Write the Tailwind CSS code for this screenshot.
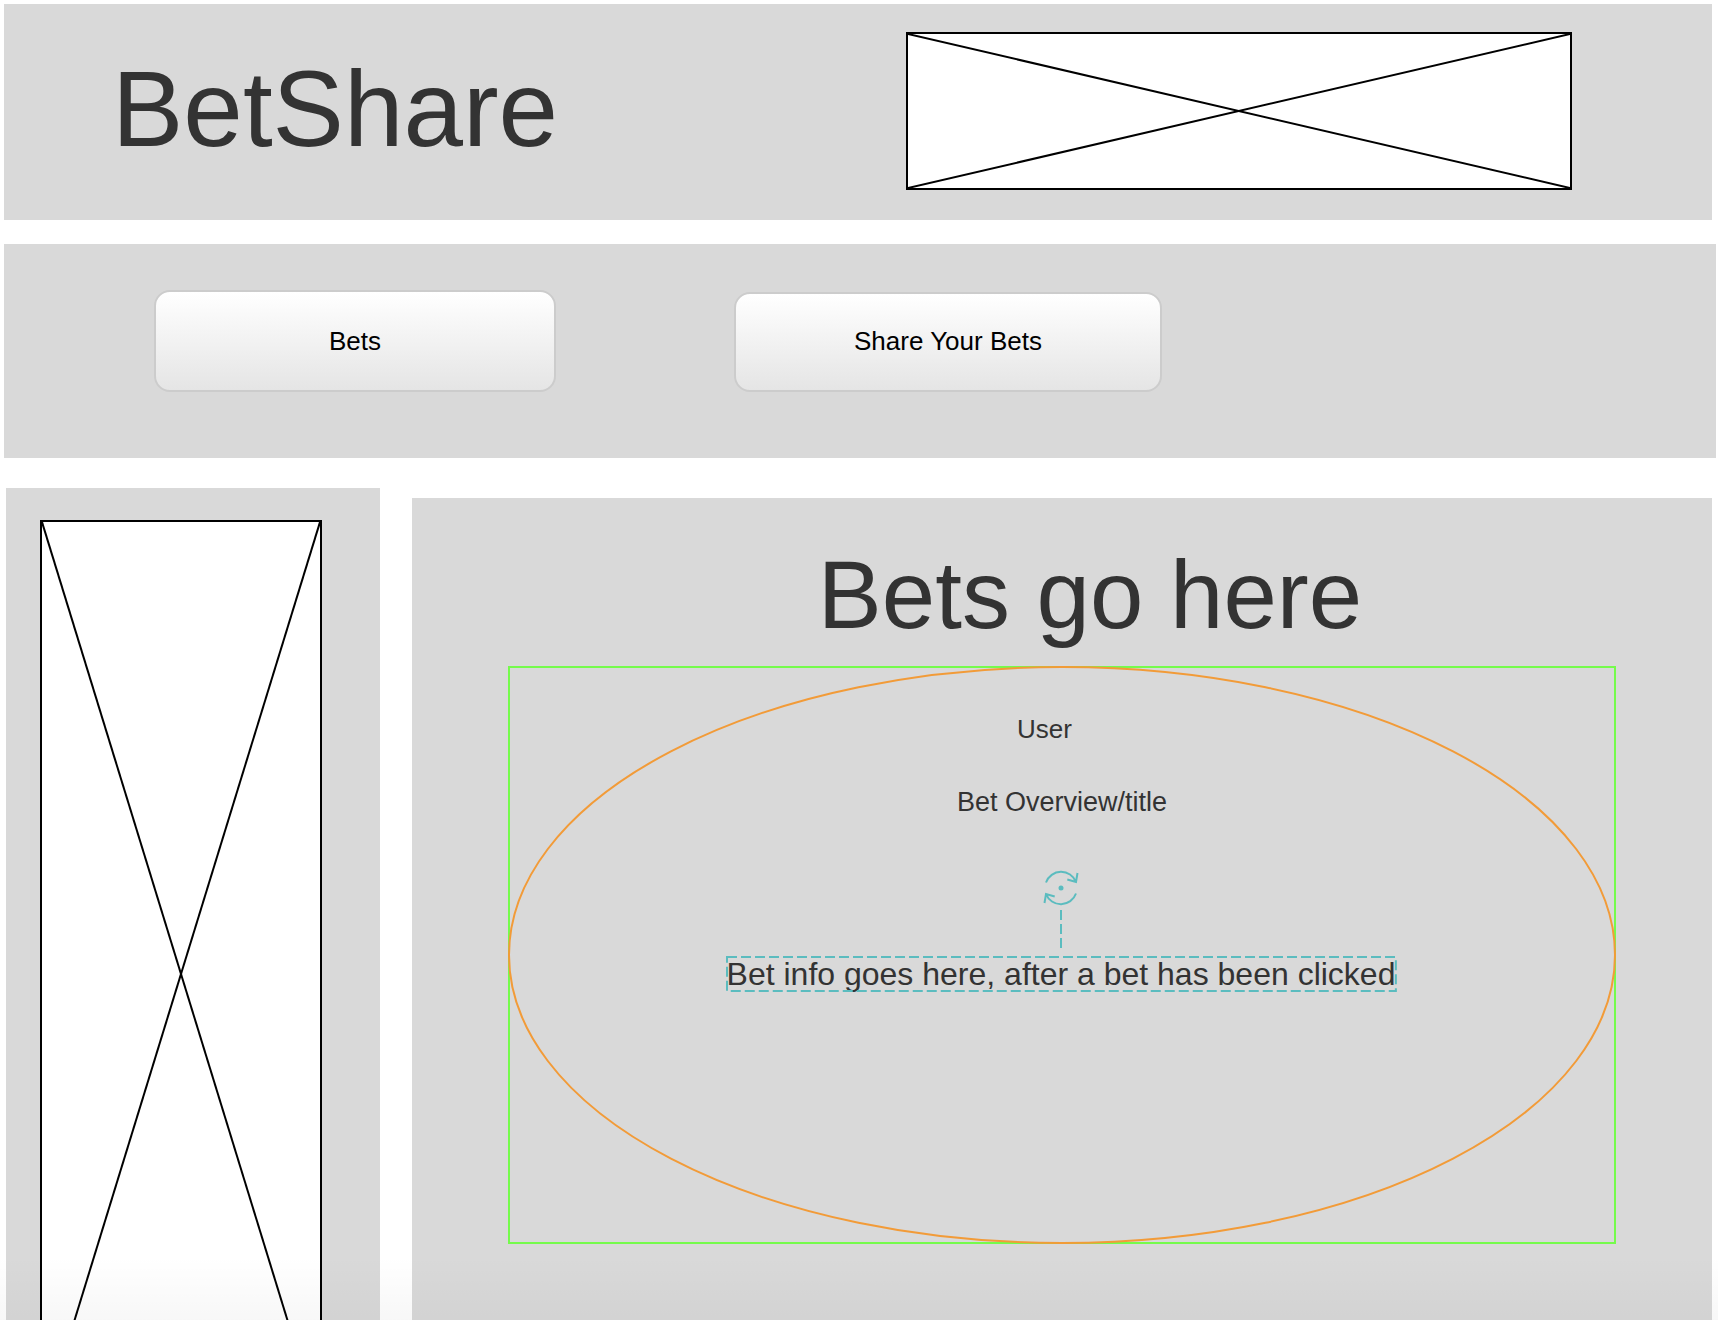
<!DOCTYPE html>
<html lang="en">
<head>
<meta charset="utf-8">
<meta name="viewport" content="width=device-width, initial-scale=1">
<title>BetShare</title>
<script src="https://cdn.jsdelivr.net/npm/@tailwindcss/browser@4"></script>
</head>
<body class="bg-white">
<div class="relative flex h-screen flex-col overflow-hidden pt-1 font-['Liberation_Sans',Arial,sans-serif] text-[#333333]">

  <header class="mr-1.5 ml-1 flex h-[216px] shrink-0 items-start justify-between bg-[#d9d9d9] pt-7 pr-[140px] pl-[108px]">
    <h1 class="pt-[17px] text-[107px] leading-[120px]">BetShare</h1>
    <!-- Banner placeholder -->
    <div class="h-[158px] w-[666px] border-2 border-black bg-white">
      <svg class="block h-full w-full" aria-hidden="true" stroke="#000" stroke-width="2">
        <line x1="0" y1="0" x2="100%" y2="100%"/>
        <line x1="100%" y1="0" x2="0" y2="100%"/>
      </svg>
    </div>
  </header>

  <nav class="mt-6 mr-0.5 ml-1 flex h-[214px] shrink-0 items-start gap-[178px] bg-[#d9d9d9] pt-[46px] pl-[150px] text-[26px] text-black">
    <button type="button" class="h-[102px] w-[402px] rounded-2xl border-2 border-[#cccccc] bg-linear-to-b from-white to-[#e5e5e5]">Bets</button>
    <button type="button" class="mt-0.5 h-[100px] w-[428px] rounded-2xl border-2 border-[#cccccc] bg-linear-to-b from-white to-[#e5e5e5] pb-0.5">Share Your Bets</button>
  </nav>

  <div class="mt-[30px] mr-1.5 ml-1.5 flex min-h-0 flex-1 gap-8">
    <!-- Sidebar placeholder, runs past the fold -->
    <aside class="w-[374px] shrink-0 overflow-hidden bg-[#d9d9d9] pt-8 pl-[34px]">
      <div class="h-[908px] w-[282px] border-2 border-black bg-white">
        <svg class="block h-full w-full" aria-hidden="true" stroke="#000" stroke-width="2">
          <line x1="0" y1="0" x2="100%" y2="100%"/>
          <line x1="100%" y1="0" x2="0" y2="100%"/>
        </svg>
      </div>
    </aside>

    <main class="mt-2.5 min-w-0 flex-1 bg-[#d9d9d9] px-24">
      <h2 class="pt-[33px] pb-[7px] pl-14 text-center text-8xl leading-[128px] whitespace-nowrap">Bets go here</h2>

      <section class="relative flex h-[578px] flex-col items-center pt-12 outline-2 -outline-offset-2 outline-[#75fb4c]">
        <svg class="absolute inset-px h-[calc(100%-2px)] w-[calc(100%-2px)] overflow-visible" aria-hidden="true">
          <ellipse cx="50%" cy="50%" rx="50%" ry="50%" fill="none" stroke="#f29b38" stroke-width="2"/>
        </svg>
        <h3 class="pr-[35px] text-[26px] leading-[30px]">User</h3>
        <p class="mt-[43px] text-[27px] leading-[30px]">Bet Overview/title</p>

        <!-- Rotation handle -->
        <svg class="mt-[53px] mr-0.5 h-[78px] w-9 shrink-0" viewBox="0 0 36 78" fill="none" stroke="#5bbcbf" stroke-width="2" aria-hidden="true">
          <path d="M3 12.500A16 16 0 0 1 33 12M34.500 3L33 12L24.300 9.500"/>
          <path d="M33 23.500A16 16 0 0 1 3 24M1.500 33L3 24L11.700 26.500"/>
          <circle cx="18" cy="18" r="2.500" fill="#5bbcbf" stroke="none"/>
          <path d="M18 40V78" stroke-dasharray="10 4"/>
        </svg>

        <div class="relative mt-[9px] mr-0.5 text-[32px] leading-[34px] whitespace-nowrap">
          <p>Bet info goes here, after a bet has been clicked</p>
          <svg class="absolute inset-0 h-full w-full overflow-visible" aria-hidden="true">
            <rect width="100%" height="100%" fill="none" stroke="#5bbcbf" stroke-width="2" stroke-dasharray="10 4"/>
          </svg>
        </div>
      </section>
    </main>
  </div>

  <div class="pointer-events-none absolute inset-x-0 bottom-0 h-16 bg-linear-to-b from-black/0 to-black/3"></div>
</div>
</body>
</html>
